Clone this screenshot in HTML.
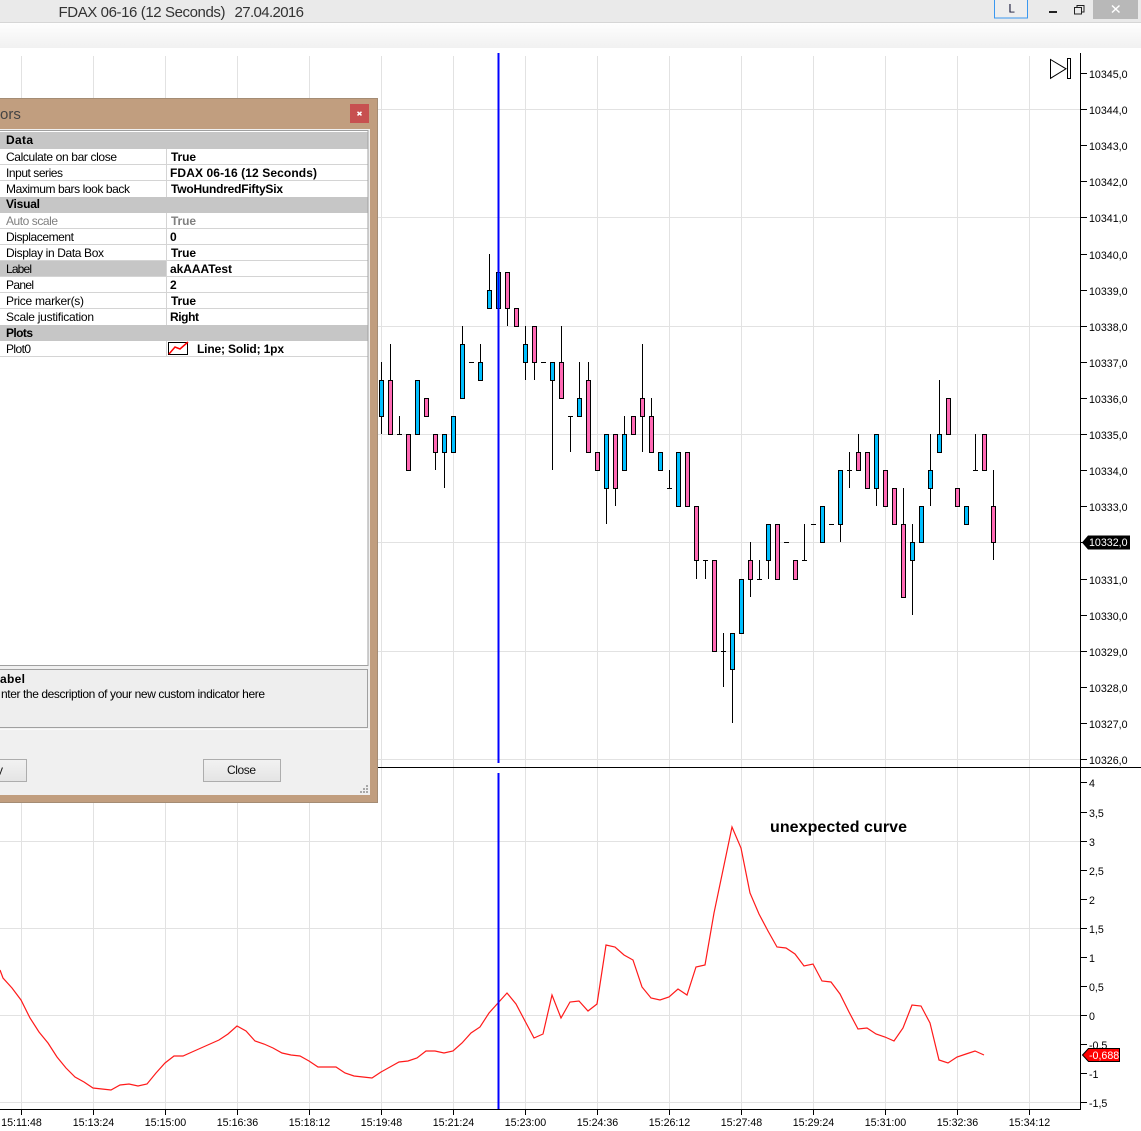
<!DOCTYPE html>
<html><head><meta charset="utf-8"><title>FDAX 06-16</title>
<style>
html,body{margin:0;padding:0;background:#fff;width:1141px;height:1131px;overflow:hidden}
svg{display:block;font-family:"Liberation Sans",Arial,sans-serif}
.ax text{font-size:10.67px;fill:#000}
.t text{font-size:10.67px;fill:#000;text-anchor:middle}
.l text{font-size:12px;fill:#000}
.v text{font-size:12px;font-weight:bold;fill:#000}
</style></head><body>
<svg width="1141" height="1131" viewBox="0 0 1141 1131" xmlns="http://www.w3.org/2000/svg">
<defs>
<linearGradient id="tb" x1="0" y1="0" x2="0" y2="1"><stop offset="0" stop-color="#fefefe"/><stop offset="1" stop-color="#f1f1f1"/></linearGradient>
<linearGradient id="bt" x1="0" y1="0" x2="0" y2="1"><stop offset="0" stop-color="#f2f2f2"/><stop offset="1" stop-color="#e4e4e4"/></linearGradient>
</defs>
<rect width="1141" height="1131" fill="#fff"/>
<!-- title + toolbar -->
<rect width="1141" height="22" fill="#eaeaea"/>
<rect y="22" width="1141" height="1" fill="#d6d6d6"/>
<rect y="23" width="1141" height="25" fill="url(#tb)"/>
<text x="58.500" y="17" font-size="15" fill="#333" textLength="167">FDAX 06-16 (12 Seconds)</text>
<text x="234.500" y="17" font-size="15" fill="#333" textLength="69.500">27.04.2016</text>
<rect x="994.500" y="-1" width="33" height="19" fill="#eee" stroke="#3a98f0"/>
<text x="1008.500" y="12.500" font-size="11.500" fill="#113">L</text>
<rect x="1049" y="11" width="8" height="2" fill="#222"/>
<path d="M1074.500 7.500h7v6.500h-7zM1077 7V5.500h7v6.500h-2.500" fill="none" stroke="#222" shape-rendering="crispEdges"/>
<rect x="1093" width="45" height="19" fill="#b8b8b8"/>
<path d="M1112 5.500l7.500 7M1119.500 5.500l-7.500 7" stroke="#fff" stroke-width="1.500" fill="none"/>
<!-- grid -->
<path shape-rendering="crispEdges" stroke="#e2e2e2" fill="none" d="M21.500 56V1109M93.500 56V1109M165.500 56V1109M237.500 56V1109M309.500 56V1109M381.500 56V1109M453.500 56V1109M525.500 56V1109M597.500 56V1109M669.500 56V1109M741.500 56V1109M813.500 56V1109M885.500 56V1109M957.500 56V1109M1029.500 56V1109M0 109.500H1080M0 217.500H1080M0 326.500H1080M0 434.500H1080M0 542.500H1080M0 651.500H1080M0 759.500H1080M0 841.500H1080M0 928.500H1080M0 1015.500H1080M0 1102.500H1080"/>
<!-- wicks -->
<path shape-rendering="crispEdges" stroke="#000" fill="none" d="M381.500 362V434M390.500 344V380M399.500 416V434M435.500 452V470M444.500 452V488M462.500 326V344M480.500 344V362M489.500 254V290M507.500 308V326M525.500 326V380M534.500 362V380M552.500 380V470M561.500 326V362M570.500 416V452M579.500 362V398M588.500 362V380M606.500 488V524M615.500 488V506M624.500 416V434M642.500 344V452M651.500 398V416M669.500 470V488M696.500 560V579M705.500 560V579M723.500 633V687M732.500 669V723M750.500 542V597M759.500 560V579M768.500 560V579M804.500 524V560M840.500 524V542M849.500 452V488M858.500 434V452M876.500 488V506M903.500 488V524M912.500 524V615M930.500 434V506M939.500 380V434M975.500 434V470M993.500 470V560
M397 434.500h5M469 362.500h5M541 362.500h5M568 416.500h5M667 488.500h5M703 560.500h5M721 651.500h5M757 579.500h5M784 542.500h5M802 560.500h5M811 524.500h5M829 524.500h5M847 470.500h5M973 470.500h5"/>
<!-- blue bodies -->
<path shape-rendering="crispEdges" stroke="#000" fill="#00bfff" d="M379.500 380.500h4V416.500h-4zM415.500 380.500h4V434.500h-4zM442.500 434.500h4V452.500h-4zM451.500 416.500h4V452.500h-4zM460.500 344.500h4V398.500h-4zM478.500 362.500h4V380.500h-4zM487.500 290.500h4V308.500h-4zM496.500 272.500h4V308.500h-4zM523.500 344.500h4V362.500h-4zM550.500 362.500h4V380.500h-4zM577.500 398.500h4V416.500h-4zM604.500 434.500h4V488.500h-4zM622.500 434.500h4V470.500h-4zM658.500 452.500h4V470.500h-4zM676.500 452.500h4V506.500h-4zM730.500 633.500h4V669.500h-4zM739.500 579.500h4V633.500h-4zM766.500 524.500h4V560.500h-4zM820.500 506.500h4V542.500h-4zM838.500 470.500h4V524.500h-4zM874.500 434.500h4V488.500h-4zM910.500 542.500h4V560.500h-4zM919.500 506.500h4V542.500h-4zM928.500 470.500h4V488.500h-4zM937.500 434.500h4V452.500h-4zM964.500 506.500h4V524.500h-4z"/>
<!-- pink bodies -->
<path shape-rendering="crispEdges" stroke="#000" fill="#ff69b4" d="M388.500 380.500h4V434.500h-4zM406.500 434.500h4V470.500h-4zM424.500 398.500h4V416.500h-4zM433.500 434.500h4V452.500h-4zM505.500 272.500h4V308.500h-4zM514.500 308.500h4V326.500h-4zM532.500 326.500h4V362.500h-4zM559.500 362.500h4V398.500h-4zM586.500 380.500h4V452.500h-4zM595.500 452.500h4V470.500h-4zM613.500 434.500h4V488.500h-4zM631.500 416.500h4V434.500h-4zM640.500 398.500h4V416.500h-4zM649.500 416.500h4V452.500h-4zM685.500 452.500h4V506.500h-4zM694.500 506.500h4V560.500h-4zM712.500 560.500h4V651.500h-4zM748.500 560.500h4V579.500h-4zM775.500 524.500h4V579.500h-4zM793.500 560.500h4V579.500h-4zM856.500 452.500h4V470.500h-4zM865.500 452.500h4V488.500h-4zM883.500 470.500h4V506.500h-4zM892.500 488.500h4V524.500h-4zM901.500 524.500h4V597.500h-4zM946.500 398.500h4V434.500h-4zM955.500 488.500h4V506.500h-4zM982.500 434.500h4V470.500h-4zM991.500 506.500h4V542.500h-4z"/>
<!-- red curve -->
<polyline fill="none" stroke="#ff1a1a" stroke-width="1.200" points="0,970 3,978 12,988 21,1000 30,1018 39,1032 48,1043 57,1057 66,1068 75,1077 84,1082 93,1088 102,1089 111,1090 120,1085 129,1084 138,1086 147,1084 156,1073 165,1063 174,1056 183,1056 192,1052 201,1048 210,1044 219,1040 228,1034 237,1026 246,1031 255,1041 264,1044 273,1048 282,1053 291,1055 300,1056 309,1061 318,1067 327,1067 336,1067 345,1073 354,1076 363,1077 372,1078 381,1072 390,1067 399,1062 408,1061 417,1058 426,1051 435,1051 444,1053 453,1051 462,1043 471,1033 480,1027 489,1013 498,1003 507,993 516,1004 525,1021 534,1038 543,1034 552,995 561,1018 570,1002 579,1001 588,1011 597,1004 606,945 615,947 624,955 633,960 642,987 651,998 660,1000 669,997 678,989 687,995 696,967 705,965 714,913 723,870 732,827 741,848 750,893 759,914 768,931 777,947 786,948 795,954 804,966 813,964 822,981 831,982 840,994 849,1012 858,1029 867,1028 876,1034 885,1037 894,1041 903,1028 912,1005 921,1006 930,1023 939,1060 948,1063 957,1057 966,1054 975,1051 984,1055"/>
<!-- cursor line -->
<path d="M498.500 53V763M498.500 773V1109" stroke="#0000ff" stroke-width="2" fill="none"/>
<!-- axes -->
<path shape-rendering="crispEdges" stroke="#000" fill="none" d="M1080.500 53V1109M0 767.500H1141M0 1109.500H1081
M1080 73.500h7M1080 109.500h7M1080 145.500h7M1080 181.500h7M1080 217.500h7M1080 254.500h7M1080 290.500h7M1080 326.500h7M1080 362.500h7M1080 398.500h7M1080 434.500h7M1080 470.500h7M1080 506.500h7M1080 542.500h7M1080 579.500h7M1080 615.500h7M1080 651.500h7M1080 687.500h7M1080 723.500h7M1080 759.500h7
M1080 782.500h7M1080 812.500h7M1080 841.500h7M1080 870.500h7M1080 899.500h7M1080 928.500h7M1080 957.500h7M1080 986.500h7M1080 1015.500h7M1080 1044.500h7M1080 1073.500h7M1080 1102.500h7
M21.500 1109v6M93.500 1109v6M165.500 1109v6M237.500 1109v6M309.500 1109v6M381.500 1109v6M453.500 1109v6M525.500 1109v6M597.500 1109v6M669.500 1109v6M741.500 1109v6M813.500 1109v6M885.500 1109v6M957.500 1109v6M1029.500 1109v6"/>
<g class="ax">
<text x="1089" y="78">10345,0</text><text x="1089" y="114">10344,0</text><text x="1089" y="150">10343,0</text><text x="1089" y="186">10342,0</text><text x="1089" y="222">10341,0</text><text x="1089" y="259">10340,0</text><text x="1089" y="295">10339,0</text><text x="1089" y="331">10338,0</text><text x="1089" y="367">10337,0</text><text x="1089" y="403">10336,0</text><text x="1089" y="439">10335,0</text><text x="1089" y="475">10334,0</text><text x="1089" y="511">10333,0</text><text x="1089" y="584">10331,0</text><text x="1089" y="620">10330,0</text><text x="1089" y="656">10329,0</text><text x="1089" y="692">10328,0</text><text x="1089" y="728">10327,0</text><text x="1089" y="764">10326,0</text>
<text x="1089" y="787">4</text><text x="1089" y="817">3,5</text><text x="1089" y="846">3</text><text x="1089" y="875">2,5</text><text x="1089" y="904">2</text><text x="1089" y="933">1,5</text><text x="1089" y="962">1</text><text x="1089" y="991">0,5</text><text x="1089" y="1020">0</text><text x="1089" y="1049">-0,5</text><text x="1089" y="1078">-1</text><text x="1089" y="1107">-1,5</text>
</g>
<g class="t">
<text x="21.500" y="1126">15:11:48</text><text x="93.500" y="1126">15:13:24</text><text x="165.500" y="1126">15:15:00</text><text x="237.500" y="1126">15:16:36</text><text x="309.500" y="1126">15:18:12</text><text x="381.500" y="1126">15:19:48</text><text x="453.500" y="1126">15:21:24</text><text x="525.500" y="1126">15:23:00</text><text x="597.500" y="1126">15:24:36</text><text x="669.500" y="1126">15:26:12</text><text x="741.500" y="1126">15:27:48</text><text x="813.500" y="1126">15:29:24</text><text x="885.500" y="1126">15:31:00</text><text x="957.500" y="1126">15:32:36</text><text x="1029.500" y="1126">15:34:12</text>
</g>
<!-- markers -->
<path d="M1082 542.500l6-7h42v14h-42z" fill="#000"/>
<text x="1089" y="546" font-size="10.670" fill="#fff">10332,0</text>
<path d="M1082.500 1055l6-6.500h31v13h-31z" fill="#f00" stroke="#000"/>
<text x="1089" y="1059" font-size="10.670" fill="#fff">-0,688</text>
<!-- go-to-end icon -->
<path d="M1050.500 59.500L1066 68.800L1050.500 78.300zM1067.500 58.500h3v20h-3z" fill="#fff" stroke="#000" stroke-width="1"/>
<text x="770" y="832" font-size="16" font-weight="bold" fill="#000" textLength="137">unexpected curve</text>
<!-- dialog -->
<rect x="-5" y="98.500" width="382.500" height="704" fill="#c19e7f" stroke="#a48c74"/>
<text x="0" y="119" font-size="15" fill="#444">ors</text>
<rect x="350" y="104" width="19" height="19" fill="#c75050"/>
<path d="M357.500 111.800l4 3.600M361.500 111.800l-4 3.600" stroke="#fff" stroke-width="1.500"/>
<rect x="-1" y="129" width="371" height="666" fill="#f0f0f0"/>
<rect x="-1" y="130.500" width="369" height="535" fill="#fff" stroke="#a0a0a0" shape-rendering="crispEdges"/>
<g shape-rendering="crispEdges">
<rect y="132" width="367.500" height="17" fill="#c6c6c6"/>
<rect y="197" width="367.500" height="16" fill="#c6c6c6"/>
<rect y="325" width="367.500" height="16" fill="#c6c6c6"/>
<rect y="261" width="166" height="15" fill="#c6c6c6"/>
<path stroke="#d4d4d4" fill="none" d="M0 164.500H367.500M0 180.500H367.500M0 228.500H367.500M0 244.500H367.500M0 260.500H367.500M0 276.500H367.500M0 292.500H367.500M0 308.500H367.500M0 356.500H367.500M166.500 149V197M166.500 213V325M166.500 341V356"/>
</g>
<g class="v">
<text x="6" y="144" textLength="27">Data</text><text x="6" y="208" textLength="34">Visual</text><text x="6" y="337" textLength="27">Plots</text>
<text x="171" y="161" textLength="25">True</text><text x="170" y="177" textLength="147">FDAX 06-16 (12 Seconds)</text><text x="171" y="193" textLength="112">TwoHundredFiftySix</text>
<text x="171" y="225" textLength="25" style="fill:#808080">True</text><text x="170" y="241">0</text><text x="171" y="257" textLength="25">True</text><text x="170" y="273" textLength="62">akAAATest</text><text x="170" y="289">2</text><text x="171" y="305" textLength="25">True</text><text x="170" y="321" textLength="29">Right</text>
<text x="197" y="353" textLength="87">Line; Solid; 1px</text>
</g>
<g class="l">
<text x="6" y="161" textLength="111">Calculate on bar close</text><text x="6" y="177" textLength="57">Input series</text><text x="6" y="193" textLength="124">Maximum bars look back</text>
<text x="6" y="225" textLength="52" style="fill:#808080">Auto scale</text><text x="6" y="241" textLength="68">Displacement</text><text x="6" y="257" textLength="98">Display in Data Box</text><text x="6" y="273" textLength="26">Label</text><text x="6" y="289" textLength="28">Panel</text><text x="6" y="305" textLength="78">Price marker(s)</text><text x="6" y="321" textLength="88">Scale justification</text><text x="6" y="353" textLength="25">Plot0</text>
</g>
<rect x="168.500" y="342.500" width="19" height="12" fill="#fff" stroke="#000" shape-rendering="crispEdges"/>
<polyline points="169,354 175,347 180,349 188,342" fill="none" stroke="#f00" stroke-width="1.500"/>
<rect x="-1" y="669.500" width="368.500" height="58" fill="#eee" stroke="#a0a0a0" shape-rendering="crispEdges"/>
<rect y="729" width="370" height="1" fill="#fafafa"/>
<text x="0" y="683" font-size="12" font-weight="bold" fill="#000" textLength="25">abel</text>
<text x="1" y="698" font-size="12" fill="#000" textLength="264">nter the description of your new custom indicator here</text>
<rect x="-2" y="759.500" width="28.500" height="22" fill="url(#bt)" stroke="#adadad" shape-rendering="crispEdges"/>
<text x="-3" y="774" font-size="12" fill="#111">y</text>
<rect x="203.500" y="759.500" width="77" height="22" fill="url(#bt)" stroke="#adadad" shape-rendering="crispEdges"/>
<text x="227" y="774" font-size="12" fill="#111" textLength="29">Close</text>
<path d="M366 785h2v2h-2zM363 788h2v2h-2zM366 788h2v2h-2zM360 791h2v2h-2zM363 791h2v2h-2zM366 791h2v2h-2z" fill="#a8a8a8"/>
</svg>
</body></html>
